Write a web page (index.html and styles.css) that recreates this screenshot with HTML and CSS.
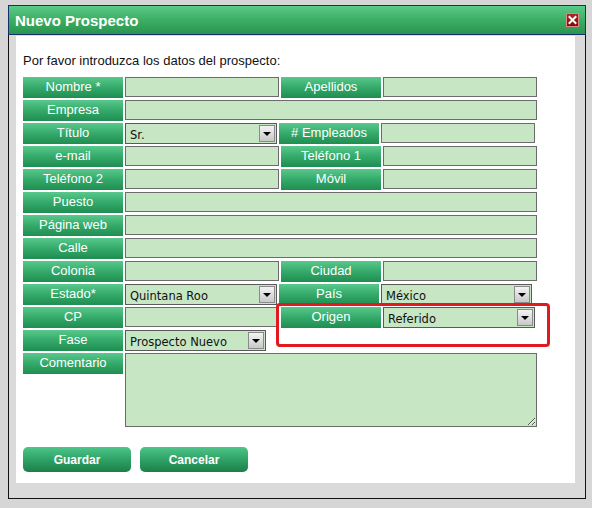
FILE: index.html
```html
<!DOCTYPE html>
<html lang="es">
<head>
<meta charset="utf-8">
<title>Nuevo Prospecto</title>
<link rel="stylesheet" href="styles.css">
</head>
<body>
<div class="dialog">
  <div class="titlebar">
    <span class="title">Nuevo Prospecto</span>
    <span class="close" aria-label="Cerrar">
      <svg width="13" height="14" viewBox="0 0 13 14"><path d="M3.5 4 L9.5 10 M9.5 4 L3.5 10" stroke="#fff" stroke-width="2" stroke-linecap="square"/></svg>
    </span>
  </div>
  <div class="body">
    <div class="panel">
      <p class="intro">Por favor introduzca los datos del prospecto:</p>
      <div class="form">
        <div class="row">
          <div class="lbl">Nombre *</div><input class="in w154" type="text">
          <div class="lbl">Apellidos</div><input class="in w154" type="text">
        </div>
        <div class="row">
          <div class="lbl">Empresa</div><input class="in wfull" type="text">
        </div>
        <div class="row">
          <div class="lbl">Título</div>
          <div class="sel w152"><span class="val">Sr.</span><span class="arrow"></span></div>
          <div class="lbl">#&nbsp;Empleados</div><input class="in w154" type="text">
        </div>
        <div class="row">
          <div class="lbl">e-mail</div><input class="in w154" type="text">
          <div class="lbl">Teléfono 1</div><input class="in w154" type="text">
        </div>
        <div class="row">
          <div class="lbl">Teléfono 2</div><input class="in w154" type="text">
          <div class="lbl">Móvil</div><input class="in w154" type="text">
        </div>
        <div class="row">
          <div class="lbl">Puesto</div><input class="in wfull" type="text">
        </div>
        <div class="row">
          <div class="lbl">Página web</div><input class="in wfull" type="text">
        </div>
        <div class="row">
          <div class="lbl">Calle</div><input class="in wfull" type="text">
        </div>
        <div class="row">
          <div class="lbl">Colonia</div><input class="in w154" type="text">
          <div class="lbl">Ciudad</div><input class="in w154" type="text">
        </div>
        <div class="row">
          <div class="lbl">Estado*</div>
          <div class="sel w152"><span class="val">Quintana Roo</span><span class="arrow"></span></div>
          <div class="lbl">País</div>
          <div class="sel w151"><span class="val">México</span><span class="arrow"></span></div>
        </div>
        <div class="row">
          <div class="lbl">CP</div><input class="in w154" type="text">
          <div class="lbl">Origen</div>
          <div class="sel w152"><span class="val">Referido</span><span class="arrow"></span></div>
        </div>
        <div class="row">
          <div class="lbl">Fase</div>
          <div class="sel w141"><span class="val">Prospecto Nuevo</span><span class="arrow"></span></div>
        </div>
        <div class="row tall">
          <div class="lbl">Comentario</div><textarea class="ta"></textarea>
        </div>
      </div>
      <div class="buttons">
        <button class="btn" type="button">Guardar</button>
        <button class="btn" type="button">Cancelar</button>
      </div>
      <div class="highlight"></div>
    </div>
  </div>
</div>
</body>
</html>
```

FILE: styles.css
```css
* { box-sizing: border-box; }
html, body { margin: 0; }
body {
  background: #d6d6d6;
  font-family: "Liberation Sans", Arial, sans-serif;
  font-size: 13px;
  width: 592px;
  height: 508px;
  overflow: hidden;
  padding: 5px 0 0 8px;
}
.dialog {
  width: 578px;
  height: 494px;
  border: 1px solid #111;
  border-top: 0;
  background: #dadada;
}
.titlebar {
  margin: 0 -1px;
  height: 30px;
  border: 1px solid #15306a;
  background: linear-gradient(#5acb88, #3cae64 50%, #2a944e);
  display: flex;
  align-items: center;
  justify-content: space-between;
  padding: 1px 6px 0 6px;
}
.title {
  color: #fff;
  font-weight: bold;
  font-size: 15px;
}
.close {
  width: 13px;
  height: 14px;
  margin-top: -1px;
  background: linear-gradient(#b02525, #7d0c0c);
  border: 1px solid #d88;
  display: flex;
}
.close svg { margin: -1px; }
.body {
  padding: 1px 10px 0 7px;
}
.panel {
  position: relative;
  background: #fff;
  height: 447px;
  padding: 17px 0 0 7px;
}
.intro {
  margin: 0 0 8px;
  line-height: 16px;
  color: #111;
}
.form {
  display: flex;
  flex-direction: column;
  gap: 2px;
}
.row {
  display: flex;
  gap: 2px;
  height: 21px;
  align-items: flex-start;
}
.row.tall { height: 74px; }
.lbl {
  width: 100px;
  height: 21px;
  line-height: 20px;
  text-align: center;
  color: #fff;
  background: linear-gradient(#58c88c, #34aa6a 50%, #1f8d51);
}
.in {
  height: 20px;
  background: #c6e6c4;
  border: 1px solid #6c6c6c;
  margin: 0;
  padding: 0;
}
.w154 { width: 154px; }
.wfull { width: 412px; }
.w152 { width: 152px; }
.w151 { width: 151px; }
.w141 { width: 141px; }
.sel {
  height: 21px;
  background: #c6e6c4;
  border: 1px solid #5a5a5a;
  display: flex;
  align-items: center;
  justify-content: space-between;
  padding: 0 1px 0 4px;
  font-family: "DejaVu Sans", Verdana, sans-serif;
  font-size: 11.5px;
  color: #111;
}
.val { padding-top: 3px; }
.arrow {
  width: 16px;
  height: 17px;
  border: 1px solid #8a8a8a;
  background: linear-gradient(#f4f4f4, #c8c8c8);
  position: relative;
}
.arrow::after {
  content: "";
  position: absolute;
  left: 3px;
  top: 6px;
  border-left: 4px solid transparent;
  border-right: 4px solid transparent;
  border-top: 4px solid #000;
}
.ta {
  width: 412px;
  height: 74px;
  background: #c6e6c4;
  border: 1px solid #6c6c6c;
  margin: 0;
  padding: 0;
  resize: both;
}
.buttons {
  display: flex;
  gap: 9px;
  margin-top: 20px;
}
.btn {
  width: 108px;
  height: 25px;
  border: 0;
  border-radius: 5px;
  background: linear-gradient(#4ec58b, #2fa266 50%, #1c7f4a);
  color: #fff;
  font-family: "Liberation Sans", Arial, sans-serif;
  font-weight: bold;
  font-size: 12px;
  padding: 0;
}
.highlight {
  position: absolute;
  left: 260px;
  top: 267px;
  width: 274px;
  height: 44px;
  border: 3px solid #e01a1f;
  border-radius: 4px;
}
```
